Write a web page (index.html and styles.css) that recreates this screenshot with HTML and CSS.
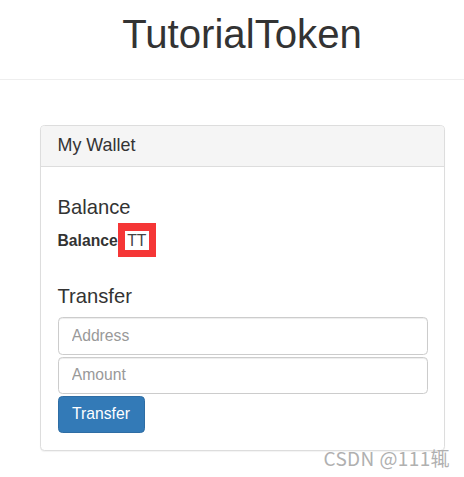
FILE: index.html
```html
<!DOCTYPE html>
<html>
<head>
<meta charset="utf-8">
<title>TutorialToken</title>
<link rel="stylesheet" href="styles.css">
</head>
<body>
<header class="site-header">
  <h1 class="site-title">TutorialToken</h1>
</header>
<main class="main">
  <section class="panel">
    <div class="panel-heading">
      <h3 class="panel-title">My Wallet</h3>
    </div>
    <div class="panel-body">
      <h4 class="section-title">Balance</h4>
      <p class="balance-line"><strong>Balance</strong><span class="highlight">TT</span></p>
      <h4 class="section-title transfer-title">Transfer</h4>
      <input class="form-control" type="text" placeholder="Address">
      <input class="form-control" type="text" placeholder="Amount">
      <button class="btn-primary" type="button">Transfer</button>
    </div>
  </section>
</main>
<div class="watermark">CSDN @111辄</div>
</body>
</html>
```

FILE: styles.css
```css
* { box-sizing: border-box; }
html, body { margin: 0; padding: 0; background: #fff; }
body {
  font-family: "Liberation Sans", Arial, sans-serif;
  font-size: 15.7px;
  line-height: 1.42857;
  color: #333;
  position: relative;
  min-height: 477px;
}
.site-header {
  padding: 12.8px 0 22.4px 20px;
  border-bottom: 1px solid #eee;
}
.site-title {
  margin: 0;
  font-size: 40.2px;
  font-weight: 500;
  line-height: 1.085;
  text-align: center;
}
.main {
  padding: 45px 19px 0 40px;
}
.panel {
  border: 1px solid #ddd;
  border-radius: 4.4px;
  background: #fff;
  box-shadow: 0 1px 1px rgba(0,0,0,0.05);
}
.panel-heading {
  background: #f5f5f5;
  border-bottom: 1px solid #ddd;
  border-radius: 3.4px 3.4px 0 0;
  padding: 10px 16.5px 10.6px;
}
.panel-title {
  margin: 0;
  font-size: 17.9px;
  font-weight: 500;
  line-height: 19.36px;
}
.panel-body {
  padding: 16.5px 16.5px 16.5px;
  display: flex;
  flex-direction: column;
  align-items: stretch;
}
.section-title {
  margin: 13.5px 0 11px;
  font-size: 20.2px;
  font-weight: 500;
  line-height: 21.78px;
}
.transfer-title {
  margin-top: 34.3px;
  margin-bottom: 9.5px;
}
.balance-line {
  margin: 0;
  line-height: 22px;
}
.balance-line strong { font-weight: 700; }
.highlight {
  border: 7px solid #f53636;
  border-top-width: 8px;
  padding: 1px 2.5px 1.5px;
  background: #fff;
  color: #444;
}
.form-control {
  display: block;
  width: 100%;
  height: 37.4px;
  margin: 0 0 2px;
  padding: 6.6px 13.2px;
  font-family: inherit;
  font-size: 15.7px;
  color: #555;
  background: #fff;
  border: 1px solid #ccc;
  border-radius: 4.4px;
  box-shadow: inset 0 1px 1px rgba(0,0,0,0.075);
}
.form-control::placeholder { color: #999; }
.btn-primary {
  align-self: flex-start;
  height: 37.4px;
  padding: 6.6px 13.6px;
  font-family: inherit;
  font-size: 15.7px;
  line-height: 1.42857;
  color: #fff;
  background: #337ab7;
  border: 1px solid #2e6da4;
  border-radius: 4.4px;
}
.watermark {
  position: absolute;
  right: 14px;
  top: 448px;
  font-family: "Noto Sans CJK SC", "Noto Sans", sans-serif;
  font-size: 19px;
  letter-spacing: 0.4px;
  line-height: 1;
  color: #b0b0b0;
  text-shadow: 0 0 2px #fff;
}
```
